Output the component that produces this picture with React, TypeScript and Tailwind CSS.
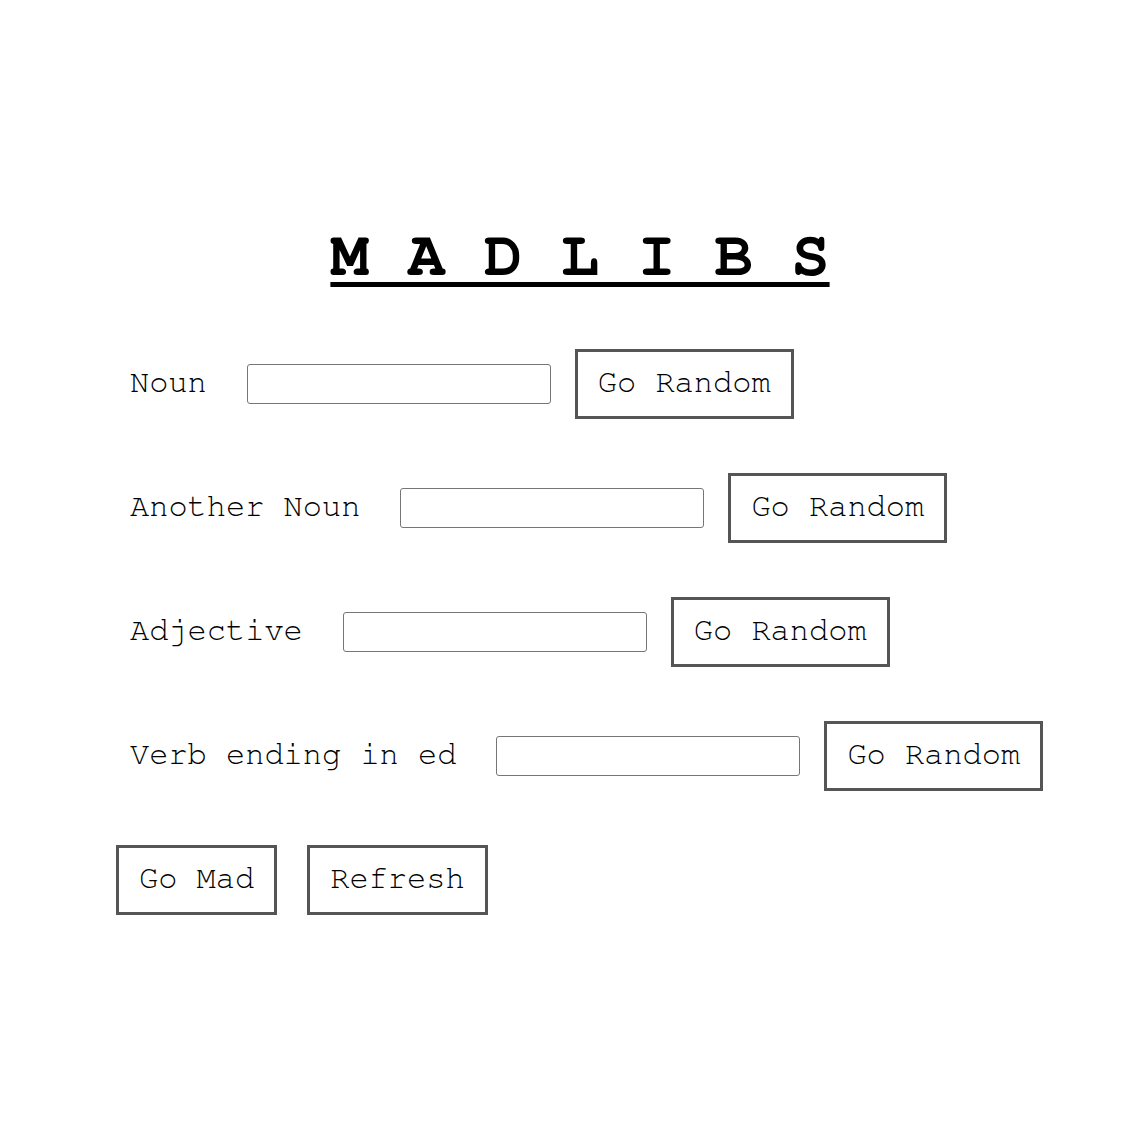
const mono = "font-['Nimbus_Mono_PS','Nimbus_Mono_L','FreeMono','Courier','Liberation_Mono',monospace]";

const fields = ["Noun", "Another Noun", "Adjective", "Verb ending in ed"];

function ActionButton({ label }: { label: string }) {
  return (
    <button className="border-[3px] border-[#555555] bg-white px-[20px] pt-[12px] pb-[16px] text-[32px] leading-[36px] text-black">
      {label}
    </button>
  );
}

function FieldRow({ label }: { label: string }) {
  return (
    <div className="flex items-center">
      <label className="mr-[40px] pb-[4px] text-[32px] leading-[36px] whitespace-pre">{label}</label>
      <input
        type="text"
        className="h-[40px] w-[304px] rounded-[3px] border border-[#767676] bg-white"
      />
      <div className="ml-[24px]">
        <ActionButton label="Go Random" />
      </div>
    </div>
  );
}

export default function App() {
  return (
    <div className={`${mono} min-h-[1146px] w-full bg-white text-black`}>
      <div className="pt-[220px] pl-[14px] text-center">
        <h1 className="inline-block text-[64px] leading-[72px] font-bold underline decoration-[5px] underline-offset-[7px] whitespace-pre">
          M A D L I B S
        </h1>
      </div>
      <div className="mt-[57px] flex flex-col gap-[54px] pl-[130px]">
        {fields.map((f) => (
          <FieldRow key={f} label={f} />
        ))}
      </div>
      <div className="mt-[54px] flex gap-[30px] pl-[116px]">
        <ActionButton label="Go Mad" />
        <ActionButton label="Refresh" />
      </div>
    </div>
  );
}
